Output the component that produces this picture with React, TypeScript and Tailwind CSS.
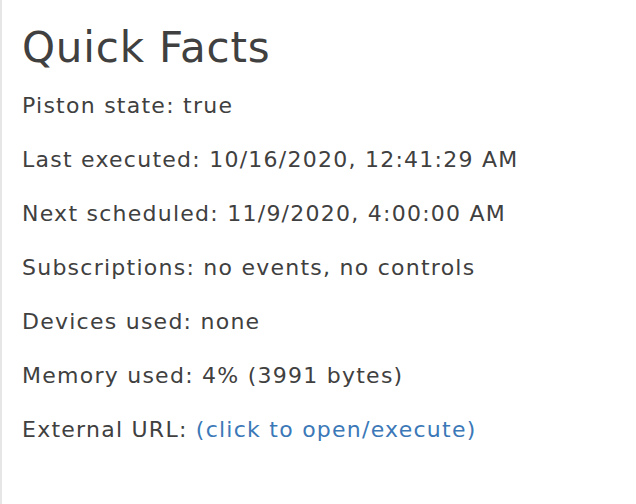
import React from "react";

const facts: { label: string; value: string }[] = [
  { label: "Piston state", value: "true" },
  { label: "Last executed", value: "10/16/2020, 12:41:29 AM" },
  { label: "Next scheduled", value: "11/9/2020, 4:00:00 AM" },
  { label: "Subscriptions", value: "no events, no controls" },
  { label: "Devices used", value: "none" },
  { label: "Memory used", value: "4% (3991 bytes)" },
];

export default function App() {
  return (
    <div className="h-[504px] w-[636px] bg-white border-l-2 border-[#e6e6e6] pl-[20px] pt-[22px] font-['DejaVu_Sans',Verdana,sans-serif] text-[#404040]">
      <h1 className="text-[42px] leading-[52px] font-normal tracking-[0.8px]">Quick Facts</h1>
      <div className="mt-[5px] flex flex-col">
        {facts.map((f) => (
          <p key={f.label} className="text-[22px] leading-[54px] tracking-[1.25px]">
            {f.label}: {f.value}
          </p>
        ))}
        <p className="text-[22px] leading-[54px] tracking-[1.25px]">
          External URL: <a className="text-[#3b78b8]">(click to open/execute)</a>
        </p>
      </div>
    </div>
  );
}
